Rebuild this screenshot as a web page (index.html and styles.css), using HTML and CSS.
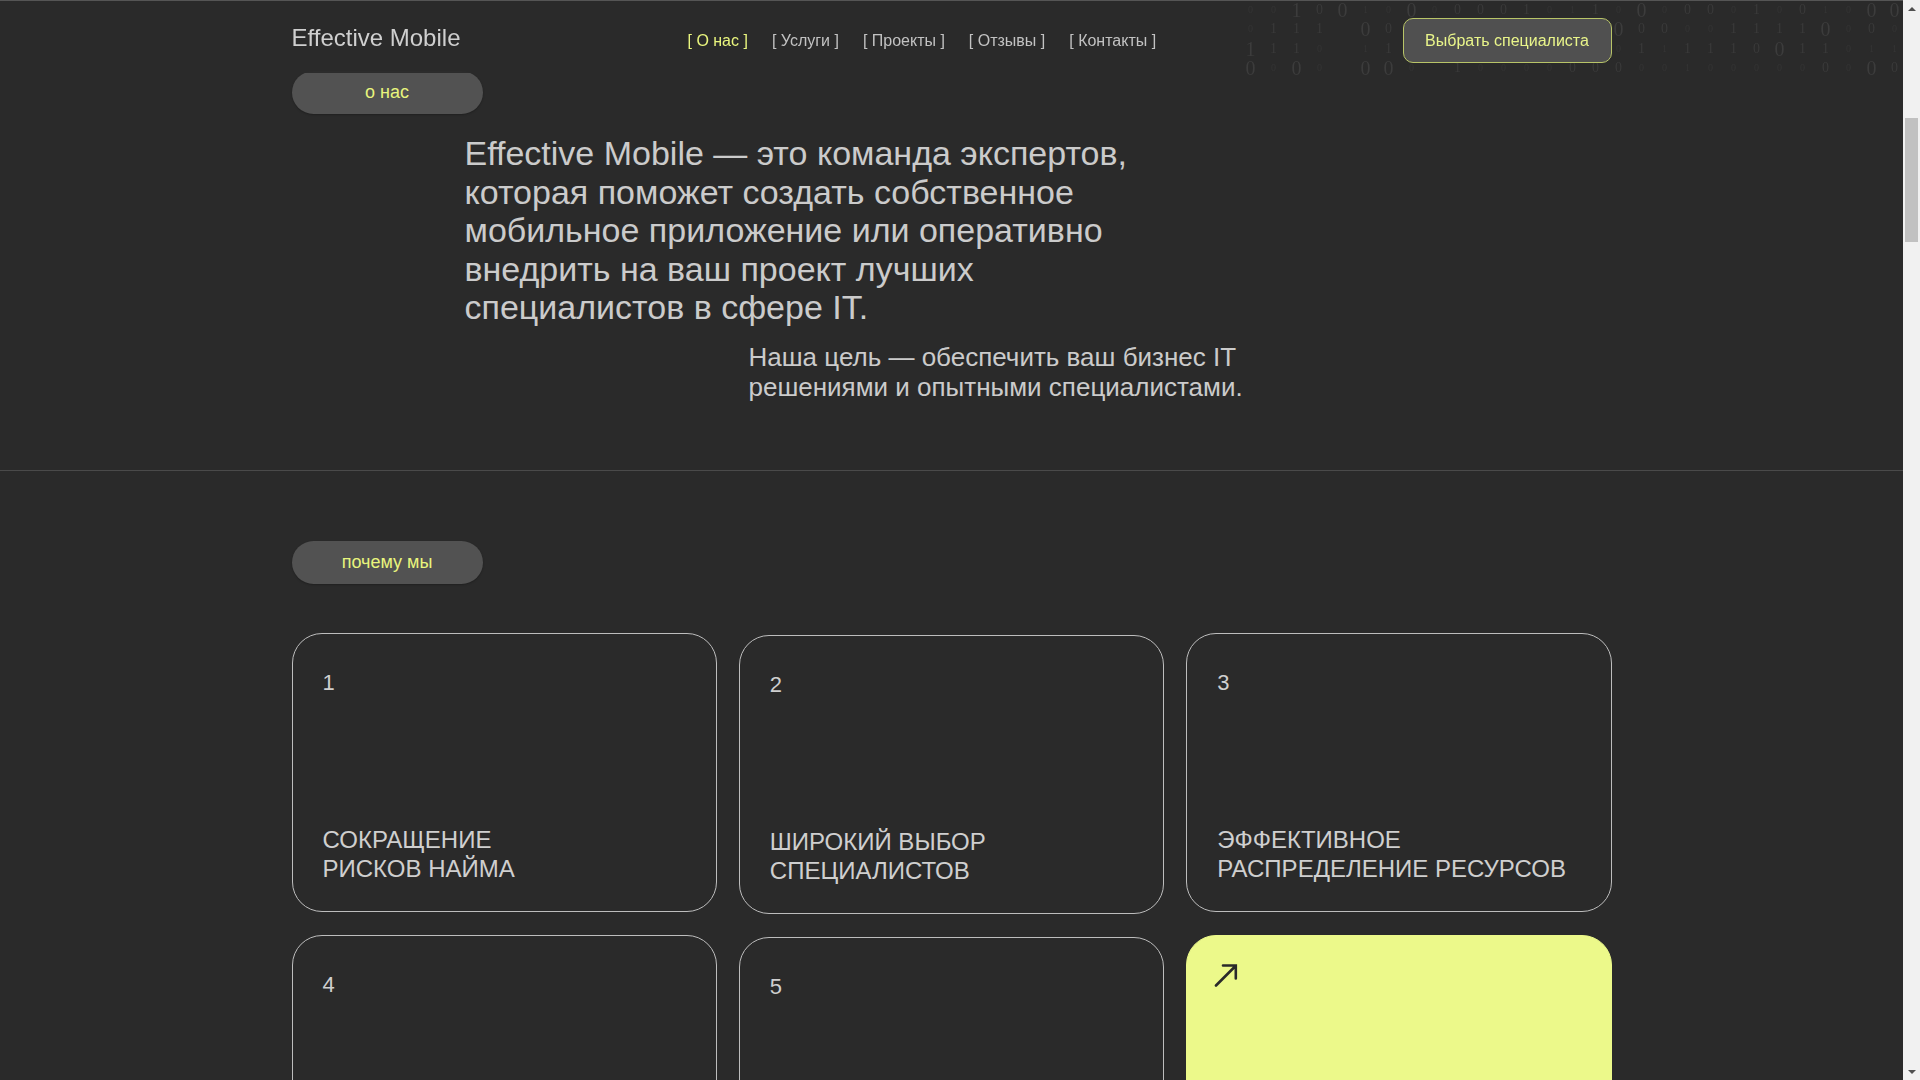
FILE: index.html
```html
<!DOCTYPE html>
<html lang="ru">
<head>
<meta charset="utf-8">
<title>Effective Mobile</title>
<link rel="stylesheet" href="styles.css">
</head>
<body>
<header class="site-header">
  <div class="binary" aria-hidden="true">
    <i class="s">0</i><i class="s">0</i><i class="l">1</i><i class="m">0</i><i class="l">0</i><i class="s">1</i><i class="s">0</i><i class="l">0</i><i class="s">0</i><i class="m">0</i><i class="m">0</i><i class="m">0</i><i class="m">1</i><i class="s">0</i><i class="s">1</i><i class="m">1</i><i class="s">0</i><i class="l">0</i><i class="s">0</i><i class="m">0</i><i class="m">0</i><i class="s">0</i><i class="m">1</i><i class="s">0</i><i class="m">0</i><i class="s">1</i><i class="s">0</i><i class="l">0</i><i class="l">0</i>
    <i class="s">0</i><i class="m">1</i><i class="m">1</i><i class="m">1</i><i></i><i class="l">0</i><i class="m">0</i><i class="m">0</i><i class="s">1</i><i class="s">0</i><i class="m">1</i><i class="m">0</i><i class="s">0</i><i class="m">0</i><i class="m">1</i><i class="s">0</i><i class="l">0</i><i class="m">0</i><i class="m">0</i><i class="s">0</i><i class="s">0</i><i class="m">1</i><i class="m">1</i><i class="m">1</i><i class="m">1</i><i class="l">0</i><i class="s">0</i><i class="m">0</i><i class="s">0</i>
    <i class="l">1</i><i class="m">1</i><i class="m">1</i><i class="s">0</i><i></i><i class="s">1</i><i class="m">1</i><i class="m">0</i><i class="s">1</i><i class="m">1</i><i class="s">0</i><i class="s">0</i><i class="m">1</i><i class="m">0</i><i class="s">1</i><i class="s">1</i><i class="s">0</i><i class="m">1</i><i class="s">1</i><i class="m">1</i><i class="m">1</i><i class="m">1</i><i class="m">0</i><i class="l">0</i><i class="m">1</i><i class="m">1</i><i class="s">0</i><i class="s">1</i><i class="s">1</i>
    <i class="l">0</i><i class="s">0</i><i class="l">0</i><i class="s">0</i><i></i><i class="l">0</i><i class="l">0</i><i class="s">0</i><i></i><i class="m">1</i><i class="s">0</i><i class="s">0</i><i class="s">0</i><i class="s">0</i><i class="m">0</i><i class="m">0</i><i class="m">0</i><i class="s">0</i><i class="s">0</i><i class="s">1</i><i class="s">0</i><i class="s">0</i><i class="s">0</i><i class="s">0</i><i class="s">0</i><i class="m">0</i><i class="s">0</i><i class="l">0</i><i class="m">0</i>
  </div>
  <div class="header-inner">
    <a class="logo" href="#">Effective Mobile</a>
    <nav class="nav">
      <a class="nav-link is-active" href="#">[ О нас ]</a>
      <a class="nav-link" href="#">[ Услуги ]</a>
      <a class="nav-link" href="#">[ Проекты ]</a>
      <a class="nav-link" href="#">[ Отзывы ]</a>
      <a class="nav-link" href="#">[ Контакты ]</a>
    </nav>
    <button class="btn-select" type="button">Выбрать специалиста</button>
  </div>
</header>

<main class="page">
  <section class="about">
    <div class="container">
      <span class="pill">о нас</span>
      <h1 class="about-title">Effective Mobile — это команда экспертов, которая поможет создать собственное мобильное приложение или оперативно внедрить на ваш проект лучших специалистов в сфере IT.</h1>
      <p class="about-text">Наша цель — обеспечить ваш бизнес IT решениями и опытными специалистами.</p>
    </div>
  </section>

  <section class="why">
    <div class="container">
      <span class="pill">почему мы</span>
      <div class="cards">
        <article class="card">
          <span class="card-num">1</span>
          <h3 class="card-title">Сокращение<br>рисков найма</h3>
        </article>
        <article class="card card--mid">
          <span class="card-num">2</span>
          <h3 class="card-title">Широкий выбор<br>специалистов</h3>
        </article>
        <article class="card">
          <span class="card-num">3</span>
          <h3 class="card-title">Эффективное<br>распределение ресурсов</h3>
        </article>
        <article class="card">
          <span class="card-num">4</span>
          <h3 class="card-title">Гибкость<br>сотрудничества</h3>
        </article>
        <article class="card card--mid">
          <span class="card-num">5</span>
          <h3 class="card-title">Прозрачность<br>процессов</h3>
        </article>
        <a class="card card--accent" href="#">
          <svg class="arrow" width="24" height="24" viewBox="0 0 24 24" aria-hidden="true">
            <path d="M2 22.5 L21.5 3 M9 2.5 H21.8 V15.5" fill="none" stroke="#2a2a2a" stroke-width="2.6" stroke-linecap="round" stroke-linejoin="miter"/>
          </svg>
        </a>
      </div>
    </div>
  </section>
</main>

<div class="scrollbar" aria-hidden="true">
  <span class="sb-btn sb-btn--up"></span>
  <span class="sb-track"><span class="sb-thumb"></span></span>
  <span class="sb-btn sb-btn--down"></span>
</div>
</body>
</html>
```

FILE: styles.css
```css
* {
  box-sizing: border-box;
}

html,
body {
  margin: 0;
  padding: 0;
}

body {
  background: #2a2a2a;
  color: #cacaca;
  font-family: "Liberation Sans", Arial, "Noto Sans", sans-serif;
  padding-right: 17px;
}

a {
  color: inherit;
  text-decoration: none;
}

.container {
  max-width: 1320px;
  margin: 0 auto;
}

/* Window scrollbar (the page is scrolled part-way down) */
.scrollbar {
  position: fixed;
  top: 0;
  right: 0;
  bottom: 0;
  width: 17px;
  z-index: 20;
  background: #f1f1f1;
  display: flex;
  flex-direction: column;
}

.sb-btn {
  height: 17px;
  display: flex;
  align-items: center;
  justify-content: center;
}

.sb-btn::before {
  content: "";
  width: 0;
  height: 0;
  border-left: 4px solid transparent;
  border-right: 4px solid transparent;
}

.sb-btn--up::before {
  border-bottom: 4px solid #505050;
}

.sb-btn--down::before {
  border-top: 4px solid #505050;
}

.sb-track {
  flex: 1;
  padding: 101px 2px 0;
}

.sb-thumb {
  display: block;
  height: 124px;
  background: #c1c1c1;
}

/* Header */
.site-header {
  position: fixed;
  top: 0;
  left: 0;
  right: 17px;
  height: 73px;
  z-index: 10;
  background: rgba(42, 42, 42, 0.9);
  backdrop-filter: blur(6px);
  border-top: 1px solid #555555;
}

.binary {
  position: absolute;
  top: -1px;
  right: -3px;
  display: grid;
  grid-template-columns: repeat(29, 23px);
  grid-auto-rows: 19.5px;
  align-items: center;
  justify-items: center;
  font-family: "Liberation Serif", "Times New Roman", serif;
  line-height: 1;
  z-index: 0;
  pointer-events: none;
  overflow: hidden;
}

.binary i {
  font-style: normal;
}

.binary .s {
  font-size: 10px;
  color: #353535;
}

.binary .m {
  font-size: 14px;
  color: #3a3a3a;
}

.binary .l {
  font-size: 20px;
  color: #3c3c3c;
}

.header-inner {
  position: relative;
  z-index: 1;
  max-width: 1320px;
  margin: 0 auto;
  padding-top: 17px;
  display: flex;
  align-items: center;
}

.logo {
  font-size: 24px;
  color: #cfcfcf;
  margin-bottom: 6px;
}

.nav {
  display: flex;
  gap: 24px;
  margin-left: 227px;
  font-size: 16px;
}

.nav-link {
  color: #c2c2c2;
}

.nav-link.is-active {
  color: #e9f57e;
}

.btn-select {
  margin-left: auto;
  width: 209px;
  height: 45px;
  border: 1px solid #b8c468;
  border-radius: 10px;
  background: #505050;
  color: #e9f58a;
  font-family: inherit;
  font-size: 16px;
  cursor: pointer;
}

/* Page */
.page {
  padding-top: 71px;
}

.pill {
  display: flex;
  align-items: center;
  justify-content: center;
  width: 191px;
  height: 43px;
  border-radius: 22px;
  background: #525252;
  color: #e8f57d;
  font-size: 18px;
  box-shadow: 0 1px 2px rgba(0, 0, 0, 0.25);
}

.about {
  padding-bottom: 68px;
  border-bottom: 1px solid #4a4a4a;
}

.about-title {
  margin: 20px 0 0 173px;
  max-width: 700px;
  font-size: 34px;
  line-height: 38.5px;
  font-weight: 400;
  color: #cbcbcb;
}

.about-text {
  margin: 15px 0 0 457px;
  max-width: 560px;
  font-size: 26px;
  line-height: 30px;
  color: #cbcbcb;
}

.why {
  padding: 70px 0 120px;
}

.cards {
  margin-top: 49px;
  display: grid;
  grid-template-columns: repeat(3, 1fr);
  gap: 23px 22px;
}

.card {
  height: 279px;
  border: 1px solid #bdbdbd;
  border-radius: 30px;
  padding: 36px 30px 28px;
  display: flex;
  flex-direction: column;
  justify-content: space-between;
  color: #cfcfcf;
}

.card--mid {
  transform: translateY(2px);
}

.card-num {
  font-size: 22px;
}

.card-title {
  margin: 0;
  font-size: 24px;
  line-height: 29px;
  font-weight: 400;
  text-transform: uppercase;
}

.card--accent {
  background: #ecf98a;
  border-color: #ecf98a;
  padding: 27px;
  justify-content: flex-start;
}

.arrow {
  display: block;
}
```
